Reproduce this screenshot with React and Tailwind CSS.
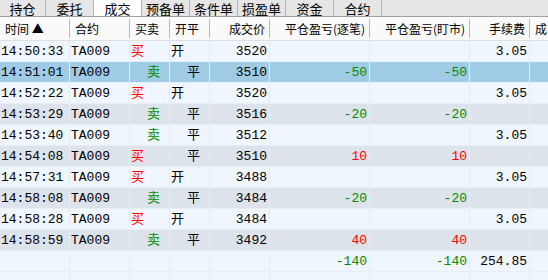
import React from "react";

const tabs = ["持仓", "委托", "成交", "预备单", "条件单", "损盈单", "资金", "合约"];

const columns = [
  { key: "time", label: "时间 ▲", w: "w-[70px]" },
  { key: "code", label: "合约", w: "w-[60px]" },
  { key: "side", label: "买卖", w: "w-[40px]" },
  { key: "oc", label: "开平", w: "w-[40px]" },
  { key: "price", label: "成交价", w: "w-[60px]", right: true },
  { key: "pnl1", label: "平仓盈亏(逐笔)", w: "w-[100px]", right: true },
  { key: "pnl2", label: "平仓盈亏(盯市)", w: "w-[100px]", right: true },
  { key: "fee", label: "手续费", w: "w-[60px]", right: true },
  { key: "more", label: "成", w: "w-[60px]" },
];

const trades = [
  { time: "14:50:33", side: "买", oc: "开", price: 3520, fee: "3.05" },
  { time: "14:51:01", side: "卖", oc: "平", price: 3510, pnl: -50 },
  { time: "14:52:22", side: "买", oc: "开", price: 3520, fee: "3.05" },
  { time: "14:53:29", side: "卖", oc: "平", price: 3516, pnl: -20 },
  { time: "14:53:40", side: "卖", oc: "平", price: 3512, fee: "3.05" },
  { time: "14:54:08", side: "买", oc: "平", price: 3510, pnl: 10 },
  { time: "14:57:31", side: "买", oc: "开", price: 3488, fee: "3.05" },
  { time: "14:58:08", side: "卖", oc: "平", price: 3484, pnl: -20 },
  { time: "14:58:28", side: "买", oc: "开", price: 3484, fee: "3.05" },
  { time: "14:58:59", side: "卖", oc: "平", price: 3492, pnl: 40 },
];

const mono = "font-['Liberation_Mono','Noto_Sans_CJK_SC',monospace] text-[13px]";

const pnlColor = (v) => (v < 0 ? "text-[#008c00]" : "text-[#ff0000]");

const Cell = ({ w, right, last, children, className }) => (
  <div
    className={`${w} shrink-0 h-full flex items-center ${right ? "justify-end pr-[2px]" : "pl-[1px]"} ${
      last ? "" : "border-r border-[#e6ecf3]"
    } ${className || ""}`}
  >
    {children}
  </div>
);

const Row = ({ t, i }) => {
  const selected = i === 1;
  const bg = selected ? "bg-[#9fcbe5]" : i % 2 === 0 ? "bg-[#f0f6fd]" : "bg-[#dde3ea]";
  const buy = t.side === "买";
  return (
    <div className={`flex h-[21px] border-b border-[#e8eef5] ${bg} ${mono} text-black leading-none`}>
      <Cell w="w-[70px]">{t.time}</Cell>
      <Cell w="w-[60px]">TA009</Cell>
      <Cell w="w-[40px]" className={buy ? "text-[#ff0000]" : "text-[#008c00] pl-[17px]"}>{t.side}</Cell>
      <Cell w="w-[40px]" className={t.oc === "开" ? "" : "pl-[17px]"}>{t.oc}</Cell>
      <Cell w="w-[60px]" right>{t.price}</Cell>
      <Cell w="w-[100px]" right className={t.pnl !== undefined ? pnlColor(t.pnl) : ""}>{t.pnl}</Cell>
      <Cell w="w-[100px]" right className={t.pnl !== undefined ? pnlColor(t.pnl) : ""}>{t.pnl}</Cell>
      <Cell w="w-[60px]" right>{t.fee}</Cell>
      <Cell w="w-[60px]" last />
    </div>
  );
};

const EmptyCells = () => (
  <>
    <Cell w="w-[70px]" />
    <Cell w="w-[60px]" />
    <Cell w="w-[40px]" />
    <Cell w="w-[40px]" />
    <Cell w="w-[60px]" />
  </>
);

export default function App() {
  return (
    <div className="w-[548px] h-[280px] overflow-hidden bg-[#f0f6fd]">
      <div className="flex h-[17px] bg-[#e6e6e6] border-b border-[#a0a0a0] font-['Noto_Sans_CJK_SC',sans-serif] text-[13px] leading-none">
        {tabs.map((tab) => (
          <div
            key={tab}
            className={`w-[48px] first:w-[46px] flex items-center justify-center border-r border-[#b4b4b4] ${
              tab === "成交" ? "bg-white" : ""
            }`}
          >
            {tab}
          </div>
        ))}
      </div>
      <div className="flex h-[24px] bg-[#fafafa] border-b border-[#e0e0e0] font-['Noto_Sans_CJK_SC',sans-serif] text-[12px] text-black leading-none">
        {columns.map((c, idx) => (
          <div key={c.key} className={`${c.w} shrink-0 h-full py-[2px]`}>
            <div
              className={`h-full flex items-center ${c.right ? "justify-end pr-[4px]" : "pl-[5px]"} ${
                idx < columns.length - 1 ? "border-r border-[#b8b8b8]" : ""
              }`}
            >
              {c.label}
            </div>
          </div>
        ))}
      </div>
      {trades.map((t, i) => (
        <Row key={t.time} t={t} i={i} />
      ))}
      <div className={`flex h-[21px] border-b border-[#e8eef5] bg-[#f0f6fd] ${mono} leading-none`}>
        <EmptyCells />
        <Cell w="w-[100px]" right className={pnlColor(-140)}>-140</Cell>
        <Cell w="w-[100px]" right className={pnlColor(-140)}>-140</Cell>
        <Cell w="w-[60px]" right>254.85</Cell>
        <Cell w="w-[60px]" last />
      </div>
      <div className="flex h-[21px] bg-[#f0f6fd]">
        <EmptyCells />
        <Cell w="w-[100px]" />
        <Cell w="w-[100px]" />
        <Cell w="w-[60px]" />
        <Cell w="w-[60px]" last />
      </div>
    </div>
  );
}
